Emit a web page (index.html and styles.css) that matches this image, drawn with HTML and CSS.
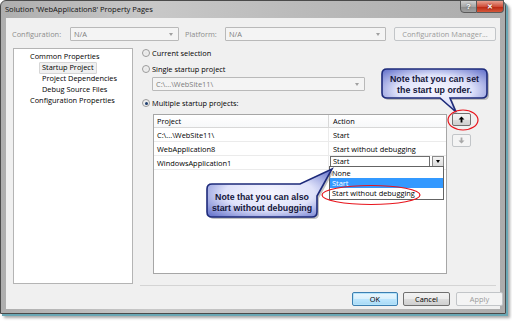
FILE: index.html
```html
<!DOCTYPE html>
<html>
<head>
<meta charset="utf-8">
<link rel="stylesheet" href="styles.css">
</head>
<body>
<div class="window">
  <div class="titlebar">
    <span class="title">Solution 'WebApplication8' Property Pages</span>
    <div class="capbtns"><span class="help">?</span><span class="close">✕</span></div>
  </div>
  <div class="client">
    <div class="configrow">
      <span class="lbl lbl-conf">Configuration:</span>
      <div class="combo dis combo-conf"><span>N/A</span><i class="arrow"></i></div>
      <span class="lbl lbl-plat">Platform:</span>
      <div class="combo dis combo-plat"><span>N/A</span><i class="arrow"></i></div>
      <div class="btn dis btn-cm">Configuration Manager...</div>
    </div>
    <div class="main">
      <div class="tree">
        <div class="node lv0">Common Properties</div>
        <div class="node lv1"><span class="sel">Startup Project</span></div>
        <div class="node lv1b">Project Dependencies</div>
        <div class="node lv1b">Debug Source Files</div>
        <div class="node lv0">Configuration Properties</div>
      </div>
      <div class="panel">
        <div class="radio r1"><i class="rb"></i><span>Current selection</span></div>
        <div class="radio r2"><i class="rb"></i><span>Single startup project</span></div>
        <div class="combo dis combo-single"><span>C:\...\WebSite11\</span><i class="arrow"></i></div>
        <div class="radio r3"><i class="rb on"></i><span>Multiple startup projects:</span></div>
        <div class="gridrow">
          <div class="grid">
            <div class="grow ghead"><div class="c1">Project</div><div class="c2">Action</div></div>
            <div class="grow"><div class="c1">C:\...\WebSite11\</div><div class="c2">Start</div></div>
            <div class="grow"><div class="c1">WebApplication8</div><div class="c2">Start without debugging</div></div>
            <div class="grow"><div class="c1">WindowsApplication1</div>
              <div class="c2 cedit"><div class="ecombo">Start</div><div class="edrop"><i class="darr"></i></div></div>
            </div>
          </div>
          <div class="arrows">
            <div class="ab up"><svg width="7" height="7" viewBox="0 0 7 7"><path d="M3.5 0.5 L6.5 3.5 H4.4 V6.5 H2.6 V3.5 H0.5 Z" fill="#000"/></svg></div>
            <div class="ab down"><svg width="7" height="7" viewBox="0 0 7 7"><path d="M3.5 6.5 L6.5 3.5 H4.4 V0.5 H2.6 V3.5 H0.5 Z" fill="#a8a8a8"/></svg></div>
          </div>
        </div>
      </div>
    </div>
    <div class="buttons">
      <div class="btn def">OK</div>
      <div class="btn">Cancel</div>
      <div class="btn dis">Apply</div>
    </div>
  </div>

  <div class="droplist">
    <div class="item">None</div>
    <div class="item hi">Start</div>
    <div class="item">Start without debugging</div>
  </div>
</div>

<svg class="overlay" width="512" height="321" viewBox="0 0 512 321">
  <defs>
    <radialGradient id="cg" cx="50%" cy="50%" r="65%">
      <stop offset="0" stop-color="#f6f6ff"/>
      <stop offset="0.55" stop-color="#dfe2fa"/>
      <stop offset="1" stop-color="#6f7ccf"/>
    </radialGradient>
  </defs>
  <path d="M389,71 H484 Q489,71 489,76 V95 Q489,100 484,100 H452 L458,114 L442,100 H389 Q384,100 384,95 V76 Q384,71 389,71 Z" fill="#9a9a9a" opacity="0.6"/>
  <path d="M387,69 H482 Q487,69 487,74 V93 Q487,98 482,98 H450 L456,112 L440,98 H387 Q382,98 382,93 V74 Q382,69 387,69 Z" fill="url(#cg)" stroke="#1d2a7a" stroke-width="1.6"/>
  <path d="M214,186 H302 L334,171 L319,198 V214 Q319,219 314,219 H214 Q209,219 209,214 V191 Q209,186 214,186 Z" fill="#9a9a9a" opacity="0.6"/>
  <path d="M212,184 H300 L332,169 L317,196 V212 Q317,217 312,217 H212 Q207,217 207,212 V189 Q207,184 212,184 Z" fill="url(#cg)" stroke="#1d2a7a" stroke-width="1.6"/>
  <ellipse cx="463" cy="120" rx="15" ry="10" fill="none" stroke="#e8141c" stroke-width="1.2"/>
  <ellipse cx="371" cy="195" rx="49" ry="9.5" fill="none" stroke="#e8141c" stroke-width="1.2"/>
</svg>
<div class="ctext ct-top">Note that you can set<br>the start up order.</div>
<div class="ctext ct-bot">Note that you can also<br>start without debugging</div>
</body>
</html>
```

FILE: styles.css
```css
body {
  margin: 0;
  background: #ffffff;
  font-family: "Open Sans", "Noto Sans", sans-serif;
  font-size: 7.4px;
  color: #000;
  width: 512px;
  height: 321px;
  overflow: hidden;
  position: relative;
}

.window {
  position: relative;
  width: 506px;
  height: 314px;
  box-sizing: border-box;
  border: 1px solid #4a4a4a;
  border-radius: 6px 6px 0 0;
  background: linear-gradient(90deg, #aeaeae, #c8c8c8 30%, #bababa 60%, #acacac);
  box-shadow: 2px 2px 0 #6aa7b4, 4px 4px 3px rgba(0, 0, 0, 0.35);
  display: flex;
  flex-direction: column;
  padding: 0 5px 4px 5px;
}

.titlebar {
  height: 17px;
  display: flex;
  align-items: flex-start;
  position: relative;
}

.title {
  font-family: "Open Sans", sans-serif;
  font-size: 7.6px;
  color: #111;
  margin-left: -1px;
  margin-top: 3px;
  letter-spacing: -0.05px;
}

.capbtns {
  margin-left: auto;
  margin-right: -4px;
  margin-top: -1px;
  display: flex;
}

.capbtns span {
  height: 13px;
  display: flex;
  align-items: center;
  justify-content: center;
  color: #fff;
  font-weight: bold;
  box-sizing: border-box;
  border: 1px solid #5a5a5a;
}

.help {
  width: 17px;
  font-size: 8px;
  font-family: "Liberation Sans", sans-serif;
  background: linear-gradient(#d0d0d0, #a8a8a8 50%, #8c8c8c 51%, #a0a0a0);
  border-radius: 0 0 0 4px;
  text-shadow: 0 0 2px #444;
}

.close {
  width: 27px;
  font-size: 7px;
  background: linear-gradient(#e8a090, #d0503c 50%, #b82410 51%, #d4583a);
  border-radius: 0 0 4px 0;
  border-left: none !important;
  text-shadow: 0 0 2px #600;
}

.client {
  flex: 1;
  background: #f0f0f0;
  padding: 9px 0 0 6px;
  display: flex;
  flex-direction: column;
  border: none;
}

.configrow {
  display: flex;
  align-items: center;
  height: 14px;
}

.lbl { color: #8d8d8d; }
.lbl-conf { width: 58px; }
.lbl-plat { width: 40px; margin-left: 6px; }

.combo {
  height: 14px;
  box-sizing: border-box;
  border: 1px solid #b9b9b9;
  background: #f4f4f4;
  display: flex;
  align-items: center;
  padding-left: 3px;
  color: #7d7d7d;
  border-radius: 1px;
}

.combo span { flex: 1; }

.arrow {
  width: 0;
  height: 0;
  border-left: 2.5px solid transparent;
  border-right: 2.5px solid transparent;
  border-top: 3px solid #a0a0a0;
  margin-right: 5px;
}

.combo-conf { width: 109px; }
.combo-plat { width: 161px; }

.btn {
  height: 14px;
  box-sizing: border-box;
  border: 1px solid #707070;
  border-radius: 2px;
  background: linear-gradient(#f2f2f2, #ebebeb 50%, #dddddd 51%, #cfcfcf);
  display: flex;
  align-items: center;
  justify-content: center;
  color: #000;
}

.btn.dis {
  border-color: #c2c5c8;
  background: #f4f4f4;
  color: #9b9b9b;
}

.btn-cm { width: 102px; margin-left: 8px; }

.main {
  display: flex;
  margin-top: 7px;
}

.tree {
  margin-left: 1px;
  width: 120px;
  height: 236px;
  box-sizing: border-box;
  border: 1px solid #b4b4b4;
  background: #fff;
  padding-top: 2px;
}

.node {
  height: 11px;
  line-height: 11px;
  white-space: nowrap;
}

.lv0 { padding-left: 16px; }
.lv1 { padding-left: 25px; }
.lv1b { padding-left: 28px; }

.sel {
  display: inline-block;
  line-height: 9px;
  padding: 0 2px 1px 2px;
  border: 1px solid #d6d6d6;
  background: #f0f0f0;
  border-radius: 1px;
}

.panel {
  margin-left: 7px;
  width: 356px;
  height: 238px;
  box-sizing: border-box;
  border-bottom: 1px solid #d4d4d4;
  display: flex;
  flex-direction: column;
}

.radio {
  height: 10px;
  display: flex;
  align-items: center;
  padding-left: 2px;
}

.r2 { margin-top: 6px; }
.r3 { margin-top: 7px; }

.rb {
  width: 8px;
  height: 8px;
  box-sizing: border-box;
  border-radius: 50%;
  border: 1px solid #9a9a9a;
  background: radial-gradient(circle, #e4e4e4, #f8f8f8);
  margin-right: 2px;
  position: relative;
}

.rb.on::after {
  content: "";
  position: absolute;
  left: 1.5px;
  top: 1.5px;
  width: 3px;
  height: 3px;
  border-radius: 50%;
  background: #1e3e6e;
}

.combo-single {
  width: 213px;
  margin-left: 12px;
  margin-top: 3px;
}

.gridrow {
  display: flex;
  margin-top: 6px;
  margin-left: 13px;
}

.grid {
  width: 294px;
  height: 160px;
  box-sizing: border-box;
  border: 1px solid #a6a6a6;
  background: #fff;
}

.grow {
  display: flex;
  height: 14px;
  box-sizing: border-box;
  border-bottom: 1px solid #ebebeb;
}

.ghead {
  height: 13px;
  border-bottom: 1px solid #d8d8d8;
  background: linear-gradient(#ffffff, #f7f8f9);
}

.c1 {
  width: 174px;
  padding-left: 3px;
  box-sizing: border-box;
  display: flex;
  align-items: center;
}

.c2 {
  flex: 1;
  padding-left: 4px;
  display: flex;
  align-items: center;
  border-left: 1px solid #ebebeb;
}

.ghead .c2 { border-left-color: #d8d8d8; }

.cedit {
  padding-left: 1px;
  padding-top: 0;
  align-items: flex-start;
}

.ecombo {
  width: 100px;
  height: 11px;
  box-sizing: border-box;
  border: 1px solid #6e6e6e;
  background: #fff;
  padding-left: 2px;
  line-height: 9px;
}

.edrop {
  width: 12px;
  height: 11px;
  margin-left: 2px;
  box-sizing: border-box;
  border: 1px solid #8a8a8a;
  background: linear-gradient(#f4f4f4, #dcdcdc);
  display: flex;
  align-items: center;
  justify-content: center;
}

.darr {
  width: 0;
  height: 0;
  border-left: 2.5px solid transparent;
  border-right: 2.5px solid transparent;
  border-top: 3px solid #000;
}

.arrows {
  margin-left: 5px;
  display: flex;
  flex-direction: column;
  gap: 8px;
  margin-top: -1px;
}

.ab {
  width: 19px;
  height: 13px;
  box-sizing: border-box;
  border: 1px solid #707070;
  border-radius: 2px;
  background: linear-gradient(#f2f2f2, #ebebeb 50%, #dddddd 51%, #cfcfcf);
  display: flex;
  align-items: center;
  justify-content: center;
}

.ab.down {
  border-color: #c2c5c8;
  background: #f4f4f4;
}

.buttons {
  display: flex;
  justify-content: flex-end;
  gap: 5px;
  margin-top: 6px;
  margin-right: -3px;
}

.buttons .btn {
  width: 47px;
}

.buttons .btn.def {
  width: 46px;
  border-color: #3c7fb1;
  background: linear-gradient(#eaf6fd, #d9f0fc 50%, #bee6fd 51%, #a7d9f5);
  box-shadow: inset 0 0 0 1px #b5e3fa;
}

.buttons .btn.dis { margin-left: 1px; }

.droplist {
  position: absolute;
  left: 328px;
  top: 165px;
  width: 115px;
  box-sizing: border-box;
  border: 1px solid #646464;
  background: #fff;
  padding: 1px 0 1px 0;
}

.item {
  height: 10px;
  line-height: 10px;
  padding-left: 2px;
}

.item.hi {
  background: #3399ff;
  color: #fff;
}

.overlay {
  position: absolute;
  left: 0;
  top: 0;
  pointer-events: none;
}

.ctext {
  position: absolute;
  font-family: "Liberation Sans", Arial, sans-serif;
  font-weight: bold;
  font-size: 8.8px;
  line-height: 11px;
  color: #14163a;
  text-align: center;
}

.ct-top {
  left: 382px;
  top: 74px;
  width: 105px;
}

.ct-bot {
  left: 207px;
  top: 192px;
  width: 110px;
  line-height: 10.5px;
}
```
